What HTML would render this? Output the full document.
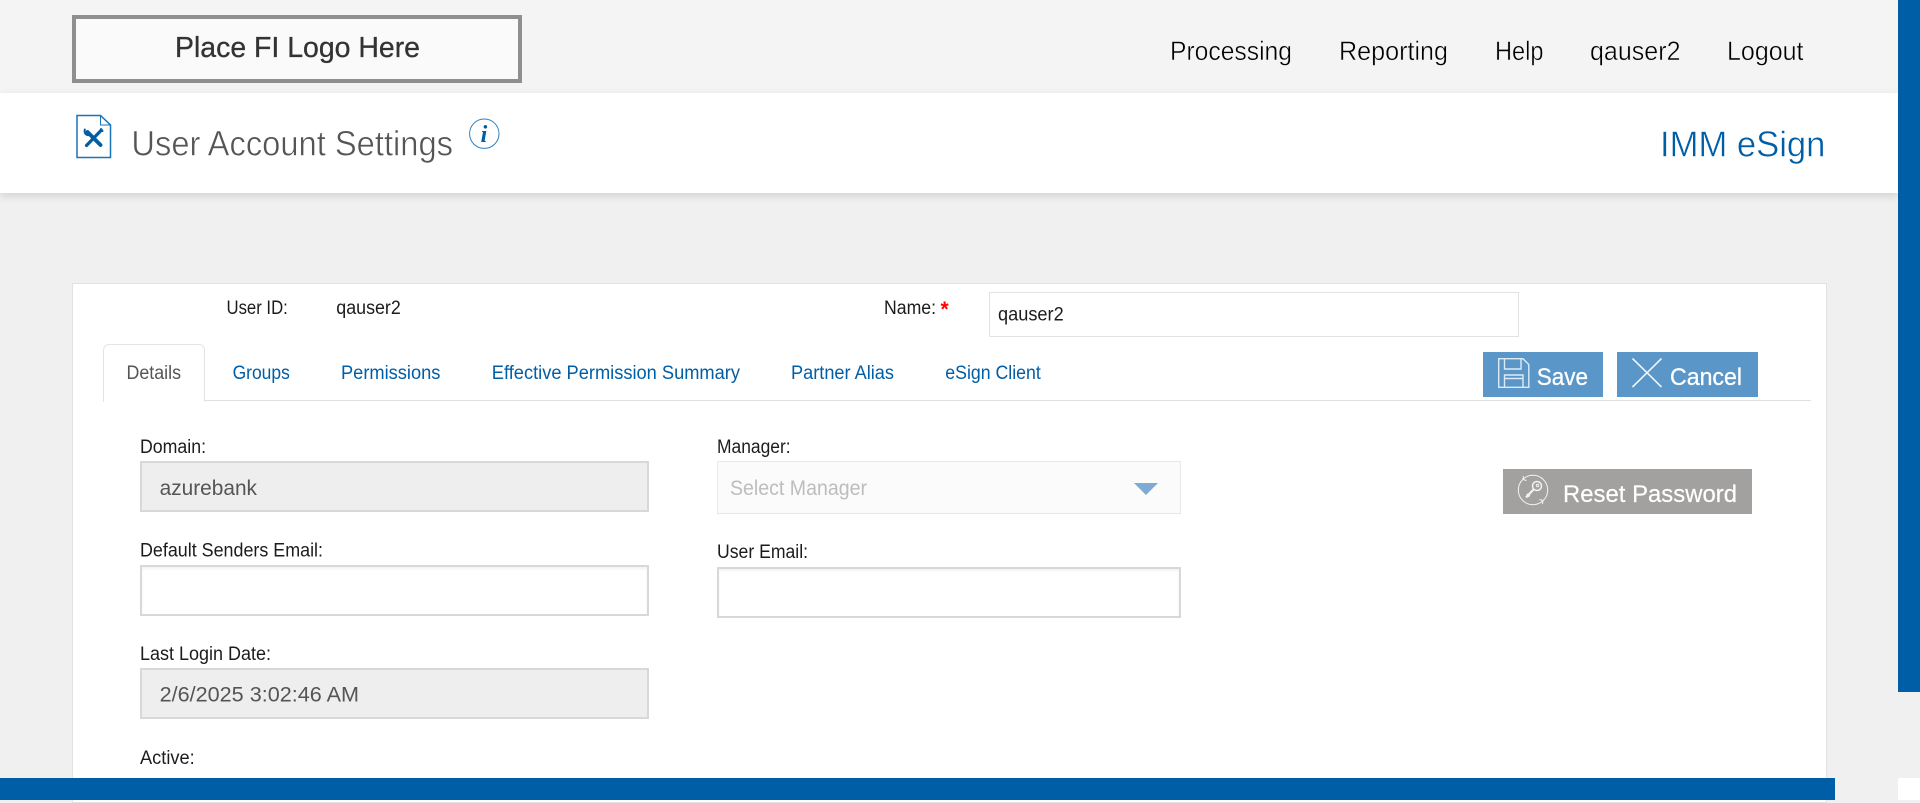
<!DOCTYPE html>
<html lang="en">
<head>
<meta charset="utf-8">
<title>User Account Settings</title>
<style>
html,body{margin:0;padding:0;width:1920px;height:800px;overflow:hidden;background:#f0f0f0;}
.b{position:absolute;box-sizing:border-box;}
svg{position:absolute;left:0;top:0;}
text{font-family:"Liberation Sans",Arial,sans-serif;}
</style>
</head>
<body>
<div class="b" style="left:0;top:0;width:1898px;height:93px;background:#f4f4f4"></div>
<div class="b" style="left:72px;top:15px;width:450px;height:68px;background:#fafafa;border:4px solid #8f8f8f"></div>
<div class="b" style="left:0;top:93px;width:1898px;height:100px;background:#fff;box-shadow:0 3px 8px rgba(0,0,0,.13)"></div>
<div class="b" style="left:72px;top:283px;width:1755px;height:520px;background:#fff;border:1px solid #e2e2e2"></div>
<div class="b" style="left:103px;top:400px;width:1708px;height:1px;background:#e0e0e0"></div>
<div class="b" style="left:103px;top:344px;width:102px;height:58px;background:#fff;border:1px solid #e4e4e4;border-bottom:0;border-radius:6px 6px 0 0"></div>
<div class="b" style="left:989px;top:292px;width:530px;height:45px;background:#fff;border:1px solid #e2e2e2"></div>
<div class="b" style="left:1483px;top:352px;width:120px;height:45px;background:#5a96c7"></div>
<div class="b" style="left:1617px;top:352px;width:141px;height:45px;background:#5a96c7"></div>
<div class="b" style="left:1503px;top:469px;width:249px;height:45px;background:#a3a19f"></div>
<div class="b" style="left:140px;top:461px;width:509px;height:51px;background:#eee;border:2px solid #d8d8d8"></div>
<div class="b" style="left:717px;top:461px;width:464px;height:53px;background:#fbfbfb;border:1px solid #e8e8e8"></div>
<div class="b" style="left:140px;top:565px;width:509px;height:51px;background:#fff;border:2px solid #d8d8d8;box-shadow:inset 0 2px 2px #f3f3f3"></div>
<div class="b" style="left:717px;top:567px;width:464px;height:51px;background:#fff;border:2px solid #d8d8d8;box-shadow:inset 0 2px 2px #f3f3f3"></div>
<div class="b" style="left:140px;top:668px;width:509px;height:51px;background:#eee;border:2px solid #d8d8d8"></div>
<div class="b" style="left:1898px;top:0;width:22px;height:692px;background:#005ea6"></div>
<div class="b" style="left:0;top:778px;width:1835px;height:22px;background:#005ea6;z-index:3"></div>
<div class="b" style="left:1898px;top:778px;width:22px;height:22px;background:#fff;z-index:3"></div>

<svg width="1920" height="800" viewBox="0 0 1920 800" style="z-index:2">
  <text x="175" y="57" font-size="29" fill="#333" stroke="#333" stroke-width=".3" textLength="245" lengthAdjust="spacingAndGlyphs">Place FI Logo Here</text>

  <g font-size="27" fill="#000" stroke="#f4f4f4" stroke-width=".45">
    <text x="1170" y="60" textLength="122" lengthAdjust="spacingAndGlyphs">Processing</text>
    <text x="1339" y="60" textLength="109" lengthAdjust="spacingAndGlyphs">Reporting</text>
    <text x="1495" y="60" textLength="48.500" lengthAdjust="spacingAndGlyphs">Help</text>
    <text x="1590" y="60" textLength="90.500" lengthAdjust="spacingAndGlyphs">qauser2</text>
    <text x="1727" y="60" textLength="76.500" lengthAdjust="spacingAndGlyphs">Logout</text>
  </g>

  <path d="M77 115.500H100.500L110.500 125V157.500H77Z" fill="#fff" stroke="#1b74b8" stroke-width="1.500"/>
  <path d="M100.500 115.500V125H110.500" fill="none" stroke="#1b74b8" stroke-width="1"/>
  <g fill="none" stroke-linecap="round">
    <path d="M87.500 132L100.500 145" stroke="#005ea6" stroke-width="3.800"/>
    <path d="M101 130.500L86.500 145.500" stroke="#005ea6" stroke-width="3.200"/>
    <path d="M84.800 129.500C84 133 86 135.500 89 135M101 129L102.500 131" stroke="#005ea6" stroke-width="2"/>
  </g>

  <text x="131.400" y="155.300" font-size="35" fill="#555" stroke="#fff" stroke-width=".55" textLength="321.600" lengthAdjust="spacingAndGlyphs">User Account Settings</text>
  <circle cx="484.300" cy="133.700" r="14.700" fill="#fff" stroke="#2f80c0" stroke-width="1"/>
  <text x="484" y="142" text-anchor="middle" font-size="24" font-weight="700" font-style="italic" fill="#005ea6" style="font-family:'Liberation Serif',serif">i</text>
  <text x="1660" y="156.500" font-size="36" fill="#005ea6" stroke="#fff" stroke-width=".5" textLength="165.400" lengthAdjust="spacingAndGlyphs">IMM eSign</text>

  <g font-size="19" fill="#1c1c1c">
    <text x="226.500" y="314" textLength="61.300" lengthAdjust="spacingAndGlyphs">User ID:</text>
    <text x="336.300" y="314" textLength="64.500" lengthAdjust="spacingAndGlyphs">qauser2</text>
    <text x="884" y="314" textLength="52" lengthAdjust="spacingAndGlyphs">Name:</text>
    <text x="998" y="320.500" textLength="65.700" lengthAdjust="spacingAndGlyphs">qauser2</text>
    <text x="140" y="453" textLength="66" lengthAdjust="spacingAndGlyphs">Domain:</text>
    <text x="717" y="453" textLength="73.600" lengthAdjust="spacingAndGlyphs">Manager:</text>
    <text x="140" y="556.700" textLength="183" lengthAdjust="spacingAndGlyphs">Default Senders Email:</text>
    <text x="717" y="558" textLength="91" lengthAdjust="spacingAndGlyphs">User Email:</text>
    <text x="140" y="660" textLength="131" lengthAdjust="spacingAndGlyphs">Last Login Date:</text>
    <text x="140" y="764" textLength="54.700" lengthAdjust="spacingAndGlyphs">Active:</text>
  </g>
  <text x="940.500" y="316" font-size="21" font-weight="700" fill="#f00">*</text>

  <g font-size="19" fill="#005ea6">
    <text x="126.500" y="379" fill="#555" textLength="54.500" lengthAdjust="spacingAndGlyphs">Details</text>
    <text x="232.600" y="379" textLength="57.200" lengthAdjust="spacingAndGlyphs">Groups</text>
    <text x="341" y="379" textLength="99.400" lengthAdjust="spacingAndGlyphs">Permissions</text>
    <text x="491.800" y="379" textLength="248.200" lengthAdjust="spacingAndGlyphs">Effective Permission Summary</text>
    <text x="791" y="379" textLength="103" lengthAdjust="spacingAndGlyphs">Partner Alias</text>
    <text x="945.300" y="379" textLength="95.500" lengthAdjust="spacingAndGlyphs">eSign Client</text>
  </g>

  <g font-size="21" fill="#555">
    <text x="159.600" y="495" textLength="97.400" lengthAdjust="spacingAndGlyphs">azurebank</text>
    <text x="159.600" y="701.700" textLength="199.400" lengthAdjust="spacingAndGlyphs">2/6/2025 3:02:46 AM</text>
    <text x="730" y="495" fill="#bdbdbd" textLength="137" lengthAdjust="spacingAndGlyphs">Select Manager</text>
  </g>
  <path d="M1134 483H1158L1146 495Z" fill="#7faad3"/>

  <g fill="none" stroke="#dcebf6" stroke-width="1.400">
    <path d="M1498.700 358.700H1523L1528.800 364.500V387.300H1498.700Z"/>
    <path d="M1504.500 358.700V369H1521V358.700"/>
    <path d="M1504.500 387.300V375H1523V387.300M1504.500 378.500H1523"/>
    <path d="M1632.500 358.500L1661.500 387M1661.500 358.500L1632.500 387" stroke-width="1.600" stroke="#eef5fa"/>
  </g>
  <g font-size="24" fill="#fff" stroke="#fff" stroke-width=".3">
    <text x="1536.700" y="385" textLength="51.300" lengthAdjust="spacingAndGlyphs">Save</text>
    <text x="1670" y="385" textLength="72" lengthAdjust="spacingAndGlyphs">Cancel</text>
  </g>

  <g fill="none" stroke="#f4f2ee" stroke-width="1">
    <circle cx="1533" cy="490" r="14.700"/>
    <path d="M1523.500 476l-.5 3.500 3.500 1M1542.500 504l.5-3.500-3.500-1"/>
    <circle cx="1537" cy="486" r="4.500" stroke-width="1.500"/>
    <circle cx="1537.500" cy="485.500" r="1.200"/>
    <path d="M1533.500 489.500L1526 497.500M1527 494l2.500 2.500" stroke-width="2.200"/>
  </g>
  <text x="1563" y="502" font-size="24" fill="#fff" stroke="#fff" stroke-width=".2" textLength="174" lengthAdjust="spacingAndGlyphs">Reset Password</text>
</svg>
</body>
</html>
